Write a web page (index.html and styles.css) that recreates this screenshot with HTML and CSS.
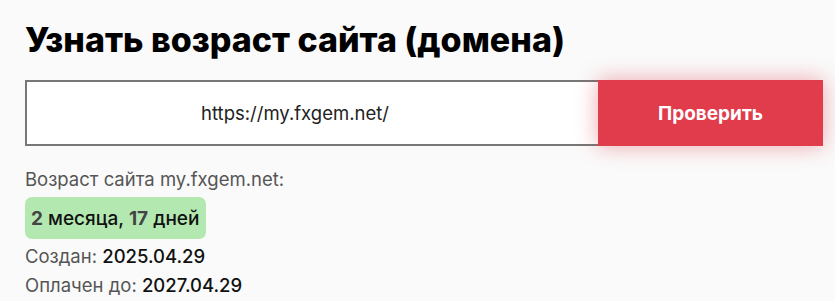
FILE: index.html
```html
<!DOCTYPE html>
<html lang="ru">
<head>
<meta charset="utf-8">
<title>Узнать возраст сайта</title>
<link rel="stylesheet" href="styles.css">
</head>
<body>
<main class="page">
  <h1 class="title">Узнать возраст сайта (домена)</h1>
  <form class="check-form">
    <input class="check-input" type="text" value="https://my.fxgem.net/">
    <button class="check-btn" type="button">Проверить</button>
  </form>
  <div class="result">
    <div class="result-line result-label">Возраст сайта my.fxgem.net:</div>
    <div class="age-badge"><b>2</b> месяца, <b>17</b> дней</div>
    <div class="result-line">Создан: <span class="value">2025.04.29</span></div>
    <div class="result-line">Оплачен до: <span class="value">2027.04.29</span></div>
  </div>
</main>
</body>
</html>
```
FILE: styles.css
```css
html, body {
  margin: 0;
  padding: 0;
  background: #fafafa;
}
body {
  font-family: "Inter", "Open Sans", "DejaVu Sans", sans-serif;
  color: #111;
}
.page {
  padding: 19px 12px 0 25px;
}
.title {
  margin: 0;
  font-size: 34px;
  line-height: 41px;
  font-weight: 800;
  color: #000;
}
.check-form {
  display: flex;
  margin-top: 20px;
  height: 66px;
}
.check-input {
  flex: 1;
  box-sizing: border-box;
  height: 66px;
  border: 2px solid #777;
  border-right: 0;
  background: #fff;
  font-family: inherit;
  font-size: 18.5px;
  color: #222;
  text-align: center;
  padding: 0 35px 0 0;
  margin: 0;
  outline: none;
}
.check-btn {
  width: 225px;
  height: 66px;
  border: 0;
  margin: 0;
  background: #e03c4c;
  color: #fff;
  font-family: inherit;
  font-size: 19px;
  font-weight: 700;
  box-shadow: 0 0 22px rgba(224, 60, 76, 0.45);
}
.result {
  margin-top: 22px;
  display: flex;
  flex-direction: column;
  align-items: flex-start;
  gap: 6px;
}
.result-line {
  font-size: 18.5px;
  line-height: 23px;
  color: #555;
}
.value {
  color: #111;
  font-weight: 500;
}
.age-badge {
  background: #b3e9b0;
  border-radius: 7px;
  padding: 0 7px 0 6px;
  height: 42px;
  display: flex;
  align-items: center;
  font-size: 19px;
  font-weight: 500;
  color: #111;
  white-space: pre;
}
.age-badge b {
  color: #444;
  font-weight: 700;
}
```
